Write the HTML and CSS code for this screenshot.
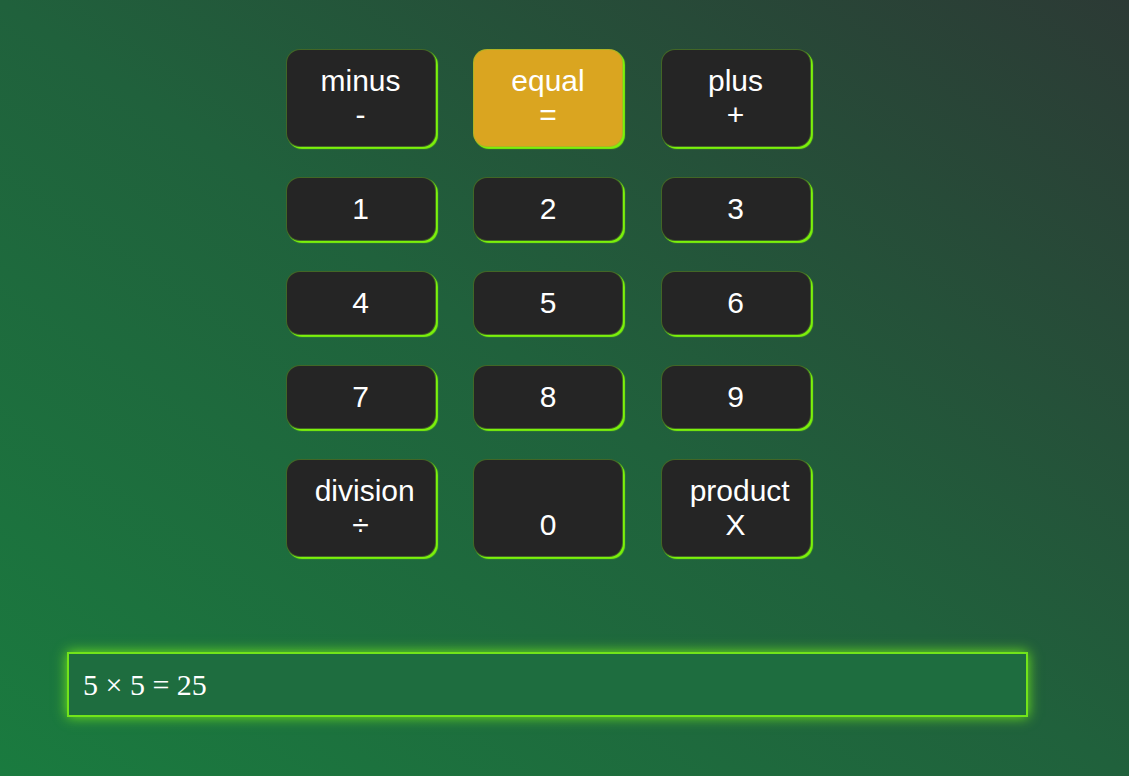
FILE: index.html
```html
<!DOCTYPE html>
<html>
<head>
<meta charset="utf-8">
<link rel="stylesheet" href="styles.css">
</head>
<body>
<div class="page">
  <div class="keys">
    <button class="key tall">minus<br>-</button>
    <button class="key tall equal">equal<br>=</button>
    <button class="key tall">plus<br>+</button>
    <button class="key">1</button>
    <button class="key">2</button>
    <button class="key">3</button>
    <button class="key">4</button>
    <button class="key">5</button>
    <button class="key">6</button>
    <button class="key">7</button>
    <button class="key">8</button>
    <button class="key">9</button>
    <button class="key tall">&nbsp;division<br>÷</button>
    <button class="key tall"><br>0</button>
    <button class="key tall">&nbsp;product<br>X</button>
  </div>
  <div class="display">5 × 5 = 25</div>
</div>
</body>
</html>
```

FILE: styles.css
```css
html, body {
  margin: 0;
  padding: 0;
  height: 100%;
}
body {
  background: linear-gradient(to top right, #1a7b3f 0%, #20613c 50%, #2c3a35 100%);
  font-family: "Liberation Sans", Arial, sans-serif;
  overflow: hidden;
}
.page {
  display: flex;
  flex-direction: column;
  padding: 49px 0 0 67px;
}
.keys {
  display: grid;
  grid-template-columns: repeat(3, 150px);
  column-gap: 37.5px;
  row-gap: 30px;
  margin-left: 218.5px;
  width: max-content;
}
.key {
  box-sizing: border-box;
  width: 150px;
  height: 64px;
  padding: 0;
  background: #252525;
  color: #ffffff;
  font-family: "Liberation Sans", Arial, sans-serif;
  font-size: 30px;
  line-height: 34px;
  text-align: center;
  border: 1px solid rgba(110, 200, 40, 0.4);
  border-radius: 14px;
  box-shadow: 2px 2px 1px #7cf20a, 1px 1px 0 #66d414;
}
.key.tall {
  height: 98px;
}
.key.equal {
  background: #daa520;
}
.display {
  box-sizing: border-box;
  margin-top: 95px;
  width: 961px;
  height: 65px;
  border: 2px solid #72e41a;
  box-shadow: 0 0 12px #72e81a;
  background: #1e6d3f;
  color: #ffffff;
  font-family: "Liberation Serif", "Times New Roman", serif;
  font-size: 30px;
  display: flex;
  align-items: center;
  padding-left: 14px;
}
```
